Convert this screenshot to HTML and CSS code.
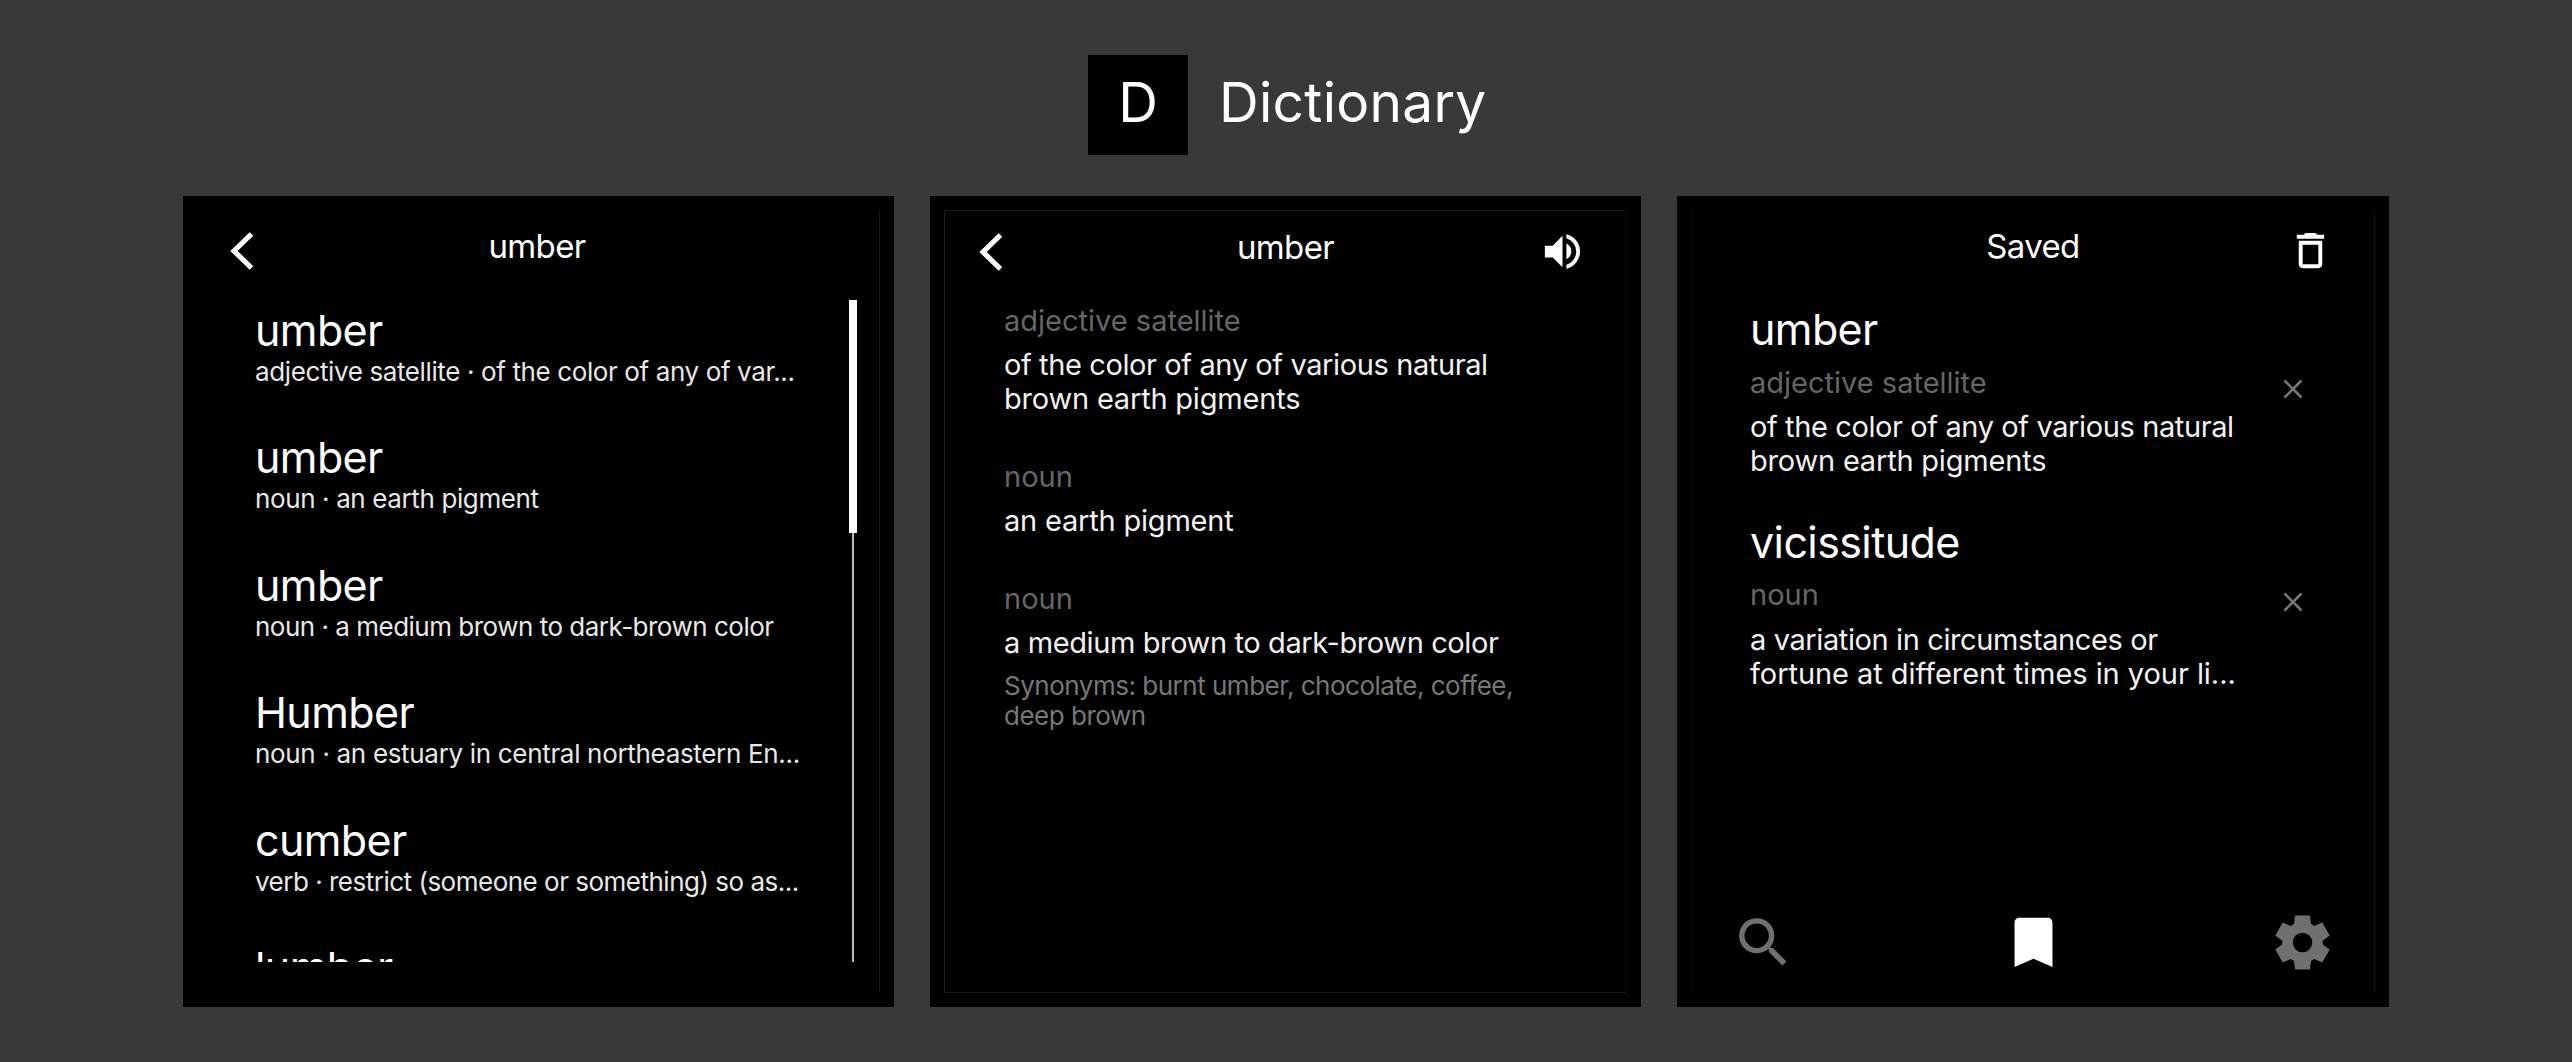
FILE: index.html
```
<!DOCTYPE html>
<html lang="en">
<head>
<meta charset="utf-8">
<title>Dictionary</title>
<link rel="stylesheet" href="styles.css">
</head>
<body>
<header class="brand"><div class="logo">D</div><h1 class="brand-name">Dictionary</h1></header>
<main class="screens">
  <section class="screen results">
    <div class="bar">
      <svg class="back" viewBox="0 0 24 38"><path d="M21.500 2 4 19l17.500 17" fill="none" stroke="#fff" stroke-width="5.200"/></svg>
      <h2 class="title">umber</h2>
    </div>
    <div class="results-body">
      <ul class="list">
        <li class="item"><div class="word">umber</div><div class="sub">adjective satellite · of the color of any of var...</div></li>
        <li class="item"><div class="word">umber</div><div class="sub">noun · an earth pigment</div></li>
        <li class="item"><div class="word">umber</div><div class="sub tight">noun · a medium brown to dark-brown color</div></li>
        <li class="item"><div class="word">Humber</div><div class="sub loose">noun · an estuary in central northeastern En...</div></li>
        <li class="item"><div class="word">cumber</div><div class="sub tight">verb · restrict (someone or something) so as...</div></li>
        <li class="item"><div class="word">lumber</div></li>
      </ul>
      <div class="scroll"><div class="thumb"></div><div class="track"></div></div>
    </div>
  </section>
  <section class="screen detail">
    <div class="bar">
      <svg class="back" viewBox="0 0 24 38"><path d="M21.500 2 4 19l17.500 17" fill="none" stroke="#fff" stroke-width="5.200"/></svg>
      <h2 class="title">umber</h2>
      <svg class="sound" viewBox="0 0 24 24"><path fill="#fff" d="M3 9v6h4l5 5V4L7 9H3zm13.500 3A4.500 4.500 0 0 0 14 7.970v8.050A4.500 4.500 0 0 0 16.500 12zM14 3.230v2.060a7 7 0 0 1 0 13.420v2.060a9 9 0 0 0 0-17.540z"/></svg>
    </div>
    <div class="senses">
      <article class="sense"><div class="pos">adjective satellite</div><div class="def">of the color of any of various natural<br><span class="loose">brown earth pigments</span></div></article>
      <article class="sense"><div class="pos">noun</div><div class="def loose">an earth pigment</div></article>
      <article class="sense"><div class="pos">noun</div><div class="def">a medium brown to dark-brown color</div><div class="syn">Synonyms: burnt umber, chocolate, coffee,<br>deep brown</div></article>
    </div>
  </section>
  <section class="screen saved">
    <div class="bar">
      <h2 class="title">Saved</h2>
      <svg class="trash" viewBox="0 0 24 24"><path fill="#fff" d="M6 19c0 1.100.9 2 2 2h8c1.100 0 2-.9 2-2V7H6v12zM8 9h8v10H8V9zm7.500-5-1-1h-5l-1 1H5v2h14V4z"/></svg>
    </div>
    <div class="saved-list">
      <article class="entry"><div class="word">umber</div><div class="pos">adjective satellite</div><div class="def">of the color of any of various natural<br><span class="loose">brown earth pigments</span></div>
        <svg class="close" viewBox="0 0 20 20"><path d="M1.500 1.500l17 17M18.500 1.500l-17 17" stroke="#777" stroke-width="2.600"/></svg></article>
      <article class="entry"><div class="word">vicissitude</div><div class="pos">noun</div><div class="def">a variation in circumstances or<br><span class="natural">fortune at different times in your li...</span></div>
        <svg class="close" viewBox="0 0 20 20"><path d="M1.500 1.500l17 17M18.500 1.500l-17 17" stroke="#777" stroke-width="2.600"/></svg></article>
    </div>
    <nav class="tabs">
      <svg class="tab" viewBox="0 0 24 24"><path fill="#707070" d="M15.500 14h-.79l-.28-.27A6.471 6.471 0 0 0 16 9.500 6.500 6.500 0 1 0 9.500 16c1.610 0 3.090-.59 4.230-1.570l.27.280v.79l5 4.990L20.490 19l-4.990-5zm-6 0C7.010 14 5 11.990 5 9.500S7.010 5 9.500 5 14 7.010 14 9.500 11.990 14 9.500 14z"/></svg>
      <svg class="tab" viewBox="0 0 24 24"><path fill="#fff" d="M17.200 2.900H6.800C5.700 2.900 5 3.700 5 4.700v16.300l7-3 7 3V4.700c0-1-.7-1.800-1.800-1.800z"/></svg>
      <svg class="tab" viewBox="0 0 24 24"><path fill="#707070" fill-rule="evenodd" d="M9.250 22l-.4-3.200q-.33-.13-.61-.3-.29-.18-.56-.38L4.700 19.380l-2.750-4.750 2.580-1.950Q4.500 12.500 4.500 12.340v-.68q0-.16.030-.34L1.950 9.370 4.700 4.620l2.980 1.250q.27-.2.570-.37.300-.18.600-.3L9.250 2h5.500l.4 3.200q.32.120.61.300.29.170.56.370l2.980-1.250 2.750 4.750-2.580 1.950q.03.180.030.340v.680q0 .16-.05.340l2.580 1.950-2.750 4.750-2.950-1.260q-.28.2-.58.380-.3.170-.6.300l-.4 3.200zM12 15.600a3.600 3.600 0 1 0 0-7.200 3.600 3.600 0 0 0 0 7.200z"/></svg>
    </nav>
  </section>
</main>
</body>
</html>
```
FILE: styles.css
```
* { box-sizing: border-box; }
body { margin: 0; width: 2572px; height: 1062px; overflow: hidden; background: #393939; color: #fff; font-family: Inter, "Liberation Sans", sans-serif; }
h1, h2, ul { margin: 0; padding: 0; font-weight: 400; list-style: none; }
svg { display: block; flex: none; }
.brand { display: flex; align-items: center; gap: 31px; height: 196px; padding: 55px 0 41px 1088px; }
.logo { width: 100px; height: 100px; background: #000; font-size: 55px; line-height: 94px; text-align: center; }
.brand-name { font-size: 55px; line-height: 94px; letter-spacing: 0.300px; margin-bottom: 6px; }
.screens { display: flex; gap: 36px; padding-left: 183px; }
.screen { position: relative; width: 711px; height: 811px; background: #000; display: flex; flex-direction: column; white-space: nowrap; }
.screen::after { content: ""; position: absolute; inset: 14px; pointer-events: none; border: 0 solid #141414; border-right-width: 1px; }
.detail::after { border-width: 1px; border-color: #1b1b1b; border-right-color: #0b0b0b; }
.saved { width: 712px; }
.saved::after { border-left: 1px solid #070707; }
.bar { position: relative; height: 104px; flex: none; }
.title { font-size: 33px; line-height: 101px; letter-spacing: -0.650px; text-align: center; }
.results .title { padding-right: 3px; }
.detail .title { line-height: 103px; }
.back, .sound, .trash { position: absolute; }
.back { left: 47px; top: 35.500px; width: 24px; height: 38px; }
.detail .back { left: 49px; top: 36.500px; }
.sound { left: 609px; top: 32px; width: 47px; height: 47px; }
.trash { left: 610px; top: 30.500px; width: 47px; height: 47px; }
.results-body { display: flex; height: 662px; justify-content: space-between; }
.list { overflow: hidden; padding: 5.500px 0 0 72px; }
.item { height: 127.500px; }
.word { font-size: 43px; line-height: 50px; letter-spacing: -0.600px; }
.item .word { line-height: 49px; }
.sub { font-size: 26px; line-height: 33px; letter-spacing: -0.380px; color: #e8e8e8; }
.sub.tight { letter-spacing: -0.500px; }
.sub.loose { letter-spacing: -0.320px; }
.scroll { width: 8px; margin-right: 37px; display: flex; flex-direction: column; align-items: center; }
.thumb { width: 8px; height: 233px; background: #fff; }
.track { width: 2px; flex: 1; background: #bbb; }
.senses { padding: 4px 0 0 74px; }
.sense { margin-bottom: 43.500px; }
.pos { font-size: 29px; line-height: 34px; color: #666; }
.def { font-size: 29px; line-height: 34px; letter-spacing: -0.390px; margin-top: 10.400px; color: #f2f2f2; }
.def.loose, .def .loose { letter-spacing: -0.200px; }
.def .natural { letter-spacing: -0.050px; }
.syn { font-size: 26px; line-height: 30px; letter-spacing: -0.490px; margin-top: 10.400px; color: #777; }
.saved-list { padding: 4.400px 0 0 73px; flex: 1; }
.entry { position: relative; height: 212.500px; }
.entry .pos { margin-top: 11.400px; }
.close { position: absolute; left: 532.500px; top: 75px; width: 20px; height: 20px; }
.tabs { display: flex; justify-content: space-between; align-items: center; padding: 0 54px 32px; }
.tab { width: 65px; height: 65px; }
```
